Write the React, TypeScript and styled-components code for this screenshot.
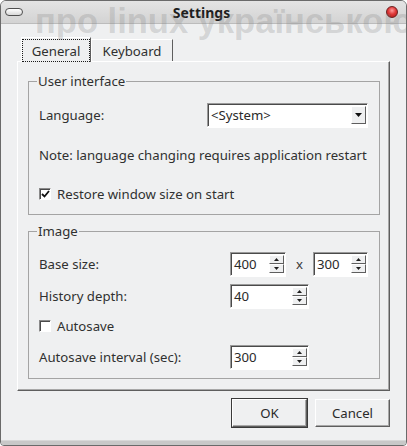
import React from 'react';
import styled, { createGlobalStyle } from 'styled-components';

const Global = createGlobalStyle`
  html, body { margin: 0; padding: 0; background: #ffffff; }
  body {
    font-family: "Noto Sans", "DejaVu Sans", sans-serif;
    font-size: 13.2px;
    color: #303030;
  }
  * { box-sizing: border-box; }
`;

const Window = styled.div`
  position: relative;
  width: 407px;
  height: 446px;
  background: #eff0f1;
  border: 1px solid #6a6a6a;
  border-radius: 6px 6px 4px 4px;
  overflow: hidden;
  display: flex;
  flex-direction: column;
`;

const Watermark = styled.div`
  position: absolute;
  left: 34px;
  top: 3px;
  font-family: "Liberation Sans", Arial, sans-serif;
  font-weight: bold;
  font-size: 34.5px;
  line-height: 34px;
  white-space: nowrap;
  color: rgba(120, 120, 120, 0.24);
  pointer-events: none;
  z-index: 10;
`;

const TitleBar = styled.div`
  height: 23px;
  display: grid;
  grid-template-columns: 1fr auto 1fr;
  align-items: center;
  padding: 0 8px 0 4px;
  background: linear-gradient(#e4e4e4, #d3d3d3);
  border-bottom: 1px solid #bcbcbc;
`;

const PillButton = styled.div`
  width: 18px;
  height: 8px;
  border: 1px solid #4f4f4f;
  border-radius: 4px;
  background: linear-gradient(#ffffff, #d8d8d8);
`;

const CloseButton = styled.div`
  justify-self: end;
  width: 12px;
  height: 12px;
  border-radius: 50%;
  border: 1px solid #6b2020;
  background: radial-gradient(circle at 50% 35%, #ff9a9a 0%, #e03a3a 45%, #a81414 100%);
`;

const Title = styled.div`
  font-weight: bold;
  font-size: 14px;
  color: #1e1e1e;
`;

const Content = styled.div`
  flex: 1;
  padding: 13px 16px 0 16px;
  display: flex;
  flex-direction: column;
`;

const TabBar = styled.div`
  height: 24px;
  display: flex;
  align-items: flex-end;
  padding-left: 4px;
`;

const Tab = styled.div<{ $active?: boolean; $width: number }>`
  position: relative;
  z-index: 1;
  width: ${p => p.$width}px;
  height: ${p => (p.$active ? 25 : 22)}px;
  margin-bottom: ${p => (p.$active ? -1 : 0)}px;
  background: #eff0f1;
  border-top: 1px solid #ffffff;
  border-left: 1px solid #ffffff;
  border-right: 1px solid #5e5e5e;
  padding: ${p => (p.$active ? '1px 0 0 0' : '0')};
  display: flex;
  align-items: stretch;
`;

const FocusRing = styled.span<{ $show?: boolean }>`
  flex: 1;
  display: flex;
  align-items: center;
  justify-content: center;
  border: 1px ${p => (p.$show ? 'dotted #1a1a1a' : 'solid transparent')};
`;

const Panel = styled.div`
  background: #eff0f1;
  border-top: 1px solid #ffffff;
  border-left: 1px solid #ffffff;
  border-right: 1px solid #5e5e5e;
  border-bottom: 1px solid #5e5e5e;
  box-shadow: inset -1px -1px 0 #a8a8a8;
  padding: 10px 9px 11px 10px;
  display: flex;
  flex-direction: column;
  gap: 7px;
`;

const Group = styled.fieldset`
  margin: 0;
  padding: 0;
  border: 1px solid #a4a4a4;
  min-width: 0;
`;

const Legend = styled.legend`
  margin-left: 8px;
  padding: 0 1px;
  line-height: 18px;
`;

const GroupBody = styled.div<{ $pt: number; $pb: number }>`
  padding: ${p => p.$pt}px 10px ${p => p.$pb}px 10px;
  display: flex;
  flex-direction: column;
`;

const Row = styled.div<{ $mt?: number; $h?: number }>`
  display: flex;
  align-items: center;
  margin-top: ${p => p.$mt ?? 0}px;
  height: ${p => (p.$h ? `${p.$h}px` : 'auto')};
  line-height: 18px;
  white-space: nowrap;
`;

const Label = styled.span<{ $w: number }>`
  width: ${p => p.$w}px;
  flex: none;
`;

const Sunken = styled.div<{ $w: number }>`
  width: ${p => p.$w}px;
  height: 24px;
  background: #ffffff;
  border-top: 1px solid #9a9a9a;
  border-left: 1px solid #9a9a9a;
  border-bottom: 1px solid #ffffff;
  border-right: 1px solid #ffffff;
  box-shadow: inset 1px 1px 0 #4a4a4a, 0 1px 0 #ffffff;
  display: flex;
  align-items: stretch;
  padding: 1px 1px 1px 3px;
`;

const FieldText = styled.span`
  flex: 1;
  display: flex;
  align-items: center;
  line-height: 18px;
  color: #2a2a2a;
`;

const SpinButtons = styled.div`
  display: flex;
  flex-direction: column;
  width: 15px;
  padding: 1px 0;
`;

const RaisedButton = styled.div`
  background: #eff0f1;
  border-top: 1px solid #ffffff;
  border-left: 1px solid #ffffff;
  border-right: 1px solid #5e5e5e;
  border-bottom: 1px solid #5e5e5e;
  display: flex;
  align-items: center;
  justify-content: center;
`;

const SpinButton = styled(RaisedButton)`
  flex: 1;
`;

const ComboButton = styled(RaisedButton)`
  width: 15px;
  margin: 1px 0;
`;

const Times = styled.span`
  width: 27px;
  text-align: center;
  color: #3a3a3a;
`;

const CheckRow = styled.label<{ $mt: number; $h: number }>`
  display: flex;
  align-items: center;
  gap: 6px;
  margin-top: ${p => p.$mt}px;
  height: ${p => p.$h}px;
  line-height: 18px;
`;

const CheckBox = styled.span`
  width: 12px;
  height: 12px;
  background: #ffffff;
  border-top: 1px solid #8a8a8a;
  border-left: 1px solid #8a8a8a;
  border-bottom: 1px solid #ffffff;
  border-right: 1px solid #ffffff;
  box-shadow: inset 1px 1px 0 #4a4a4a;
  display: flex;
  align-items: center;
  justify-content: center;
`;

const ButtonRow = styled.div`
  display: flex;
  justify-content: flex-end;
  gap: 8px;
  margin-top: 8px;
`;

const PushButton = styled.div<{ $default?: boolean }>`
  width: 75px;
  height: 28px;
  background: #eff0f1;
  border-top: 1px solid #ffffff;
  border-left: 1px solid #ffffff;
  border-right: 1px solid #5e5e5e;
  border-bottom: 1px solid #5e5e5e;
  box-shadow: inset -1px -1px 0 #a8a8a8;
  outline: ${p => (p.$default ? '1px solid #3a3a3a' : 'none')};
  display: flex;
  align-items: center;
  justify-content: center;
  color: #2a2a2a;
`;

const BottomFrame = styled.div`
  height: 5px;
  background: #c8c8c8;
  border-top: 1px solid #d8d8d8;
`;

const UpArrow = () => (
  <svg width="5" height="3" viewBox="0 0 5 3"><polygon points="0,3 2.5,0 5,3" fill="#1e1e1e" /></svg>
);
const DownArrow = () => (
  <svg width="5" height="3" viewBox="0 0 5 3"><polygon points="0,0 5,0 2.5,3" fill="#1e1e1e" /></svg>
);

const SpinBox: React.FC<{ value: string; width: number }> = ({ value, width }) => (
  <Sunken $w={width}>
    <FieldText>{value}</FieldText>
    <SpinButtons>
      <SpinButton><UpArrow /></SpinButton>
      <SpinButton><DownArrow /></SpinButton>
    </SpinButtons>
  </Sunken>
);

const Check: React.FC<{ checked?: boolean }> = ({ checked }) => (
  <CheckBox>
    {checked && (
      <svg width="9" height="8" viewBox="0 0 9 8">
        <polyline points="1,4 3.5,6.5 8,1" fill="none" stroke="#111" strokeWidth="1.8" />
      </svg>
    )}
  </CheckBox>
);

export default function App() {
  return (
    <>
      <Global />
      <Window>
        <TitleBar>
          <PillButton />
          <Title>Settings</Title>
          <CloseButton />
        </TitleBar>
        <Content>
          <TabBar>
            <Tab $active $width={70}><FocusRing $show>General</FocusRing></Tab>
            <Tab $width={82}><FocusRing>Keyboard</FocusRing></Tab>
          </TabBar>
          <Panel>
            <Group>
              <Legend>User interface</Legend>
              <GroupBody $pt={13} $pb={11}>
                <Row $h={24}>
                  <Label $w={168}>Language:</Label>
                  <Sunken $w={161}>
                    <FieldText>&lt;System&gt;</FieldText>
                    <ComboButton>
                      <svg width="7" height="4" viewBox="0 0 7 4"><polygon points="0,0 7,0 3.5,4" fill="#111" /></svg>
                    </ComboButton>
                  </Sunken>
                </Row>
                <Row $mt={19}>Note: language changing requires application restart</Row>
                <CheckRow $mt={21} $h={18}>
                  <Check checked />
                  <span>Restore window size on start</span>
                </CheckRow>
              </GroupBody>
            </Group>
            <Group>
              <Legend>Image</Legend>
              <GroupBody $pt={12} $pb={9}>
                <Row $h={24}>
                  <Label $w={191}>Base size:</Label>
                  <SpinBox value="400" width={56} />
                  <Times>x</Times>
                  <SpinBox value="300" width={55} />
                </Row>
                <Row $h={24} $mt={8}>
                  <Label $w={191}>History depth:</Label>
                  <SpinBox value="40" width={79} />
                </Row>
                <CheckRow $mt={6} $h={24}>
                  <Check />
                  <span>Autosave</span>
                </CheckRow>
                <Row $h={24} $mt={7}>
                  <Label $w={191}>Autosave interval (sec):</Label>
                  <SpinBox value="300" width={79} />
                </Row>
              </GroupBody>
            </Group>
          </Panel>
          <ButtonRow>
            <PushButton $default>OK</PushButton>
            <PushButton>Cancel</PushButton>
          </ButtonRow>
        </Content>
        <BottomFrame />
        <Watermark>про linux українською</Watermark>
      </Window>
    </>
  );
}
